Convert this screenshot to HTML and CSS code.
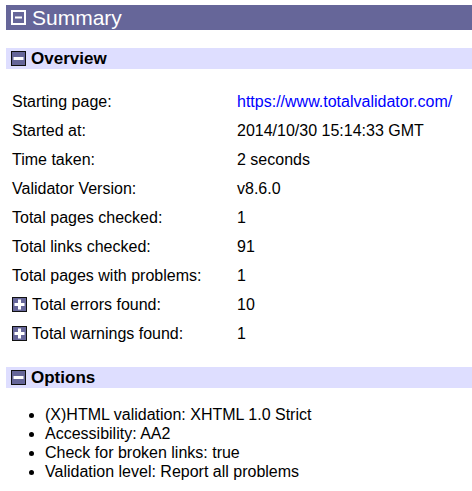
FILE: index.html
```html
<!DOCTYPE html>
<html>
<head>
<meta charset="utf-8">
<link rel="stylesheet" href="styles.css">
</head>
<body>
<div class="page">
  <div class="summary-bar">
    <svg class="icon-lg" width="15" height="15" viewBox="0 0 15 15"><rect x="1" y="1" width="13" height="13" fill="none" stroke="#fff" stroke-width="2"/><rect x="4" y="6.5" width="7" height="2" fill="#fff"/></svg>
    <span>Summary</span>
  </div>

  <div class="section-bar">
    <svg class="icon" width="15" height="15" viewBox="0 0 15 15"><rect x="0.5" y="0.5" width="14" height="14" fill="#666699" stroke="#111" stroke-width="1"/><rect x="2.5" y="6" width="10" height="3" fill="#fff"/></svg>
    <span>Overview</span>
  </div>

  <div class="overview">
    <div class="label">Starting page:</div><div class="value"><a class="link" href="#">https://www.totalvalidator.com/</a></div>
    <div class="label">Started at:</div><div class="value">2014/10/30 15:14:33 GMT</div>
    <div class="label">Time taken:</div><div class="value">2 seconds</div>
    <div class="label">Validator Version:</div><div class="value">v8.6.0</div>
    <div class="label">Total pages checked:</div><div class="value">1</div>
    <div class="label">Total links checked:</div><div class="value">91</div>
    <div class="label">Total pages with problems:</div><div class="value">1</div>
    <div class="label expand"><svg class="icon" width="15" height="15" viewBox="0 0 15 15"><rect x="0.5" y="0.5" width="14" height="14" fill="#666699" stroke="#111" stroke-width="1"/><rect x="2.5" y="6" width="10" height="3" fill="#fff"/><rect x="6" y="2.5" width="3" height="10" fill="#fff"/></svg><span>Total errors found:</span></div><div class="value">10</div>
    <div class="label expand"><svg class="icon" width="15" height="15" viewBox="0 0 15 15"><rect x="0.5" y="0.5" width="14" height="14" fill="#666699" stroke="#111" stroke-width="1"/><rect x="2.5" y="6" width="10" height="3" fill="#fff"/><rect x="6" y="2.5" width="3" height="10" fill="#fff"/></svg><span>Total warnings found:</span></div><div class="value">1</div>
  </div>

  <div class="section-bar options-bar">
    <svg class="icon" width="15" height="15" viewBox="0 0 15 15"><rect x="0.5" y="0.5" width="14" height="14" fill="#666699" stroke="#111" stroke-width="1"/><rect x="2.5" y="6" width="10" height="3" fill="#fff"/></svg>
    <span>Options</span>
  </div>

  <ul class="options">
    <li>(X)HTML validation: XHTML 1.0 Strict</li>
    <li>Accessibility: AA2</li>
    <li>Check for broken links: true</li>
    <li>Validation level: Report all problems</li>
  </ul>
</div>
</body>
</html>
```

FILE: styles.css
```css
html, body {
  margin: 0;
  padding: 0;
  background: #fff;
}
body {
  font-family: "Liberation Sans", Arial, sans-serif;
  font-size: 16px;
  color: #000;
}
.page {
  padding: 5px 0 0 6px;
}
.summary-bar {
  display: flex;
  align-items: center;
  gap: 6px;
  height: 25px;
  background: #666699;
  color: #fff;
  font-size: 21px;
  padding-left: 5px;
}
.summary-bar span {
  line-height: 25px;
}
.icon-lg {
  display: block;
  flex: none;
}
.section-bar {
  display: flex;
  align-items: center;
  gap: 5px;
  height: 21px;
  margin-top: 18px;
  background: #dedeff;
  font-weight: bold;
  font-size: 17px;
  padding-left: 5px;
}
.icon {
  display: block;
  flex: none;
}
.overview {
  display: grid;
  grid-template-columns: 225px auto;
  grid-auto-rows: 29px;
  margin-top: 18px;
  padding-left: 6px;
}
.label, .value {
  display: flex;
  align-items: center;
}
.expand {
  gap: 5px;
}
.link {
  color: #0000ff;
  text-decoration: none;
}
.options-bar {
  margin-top: 19px;
}
.options {
  margin: 17px 0 0 0;
  padding-left: 39px;
  line-height: 19px;
}
```
